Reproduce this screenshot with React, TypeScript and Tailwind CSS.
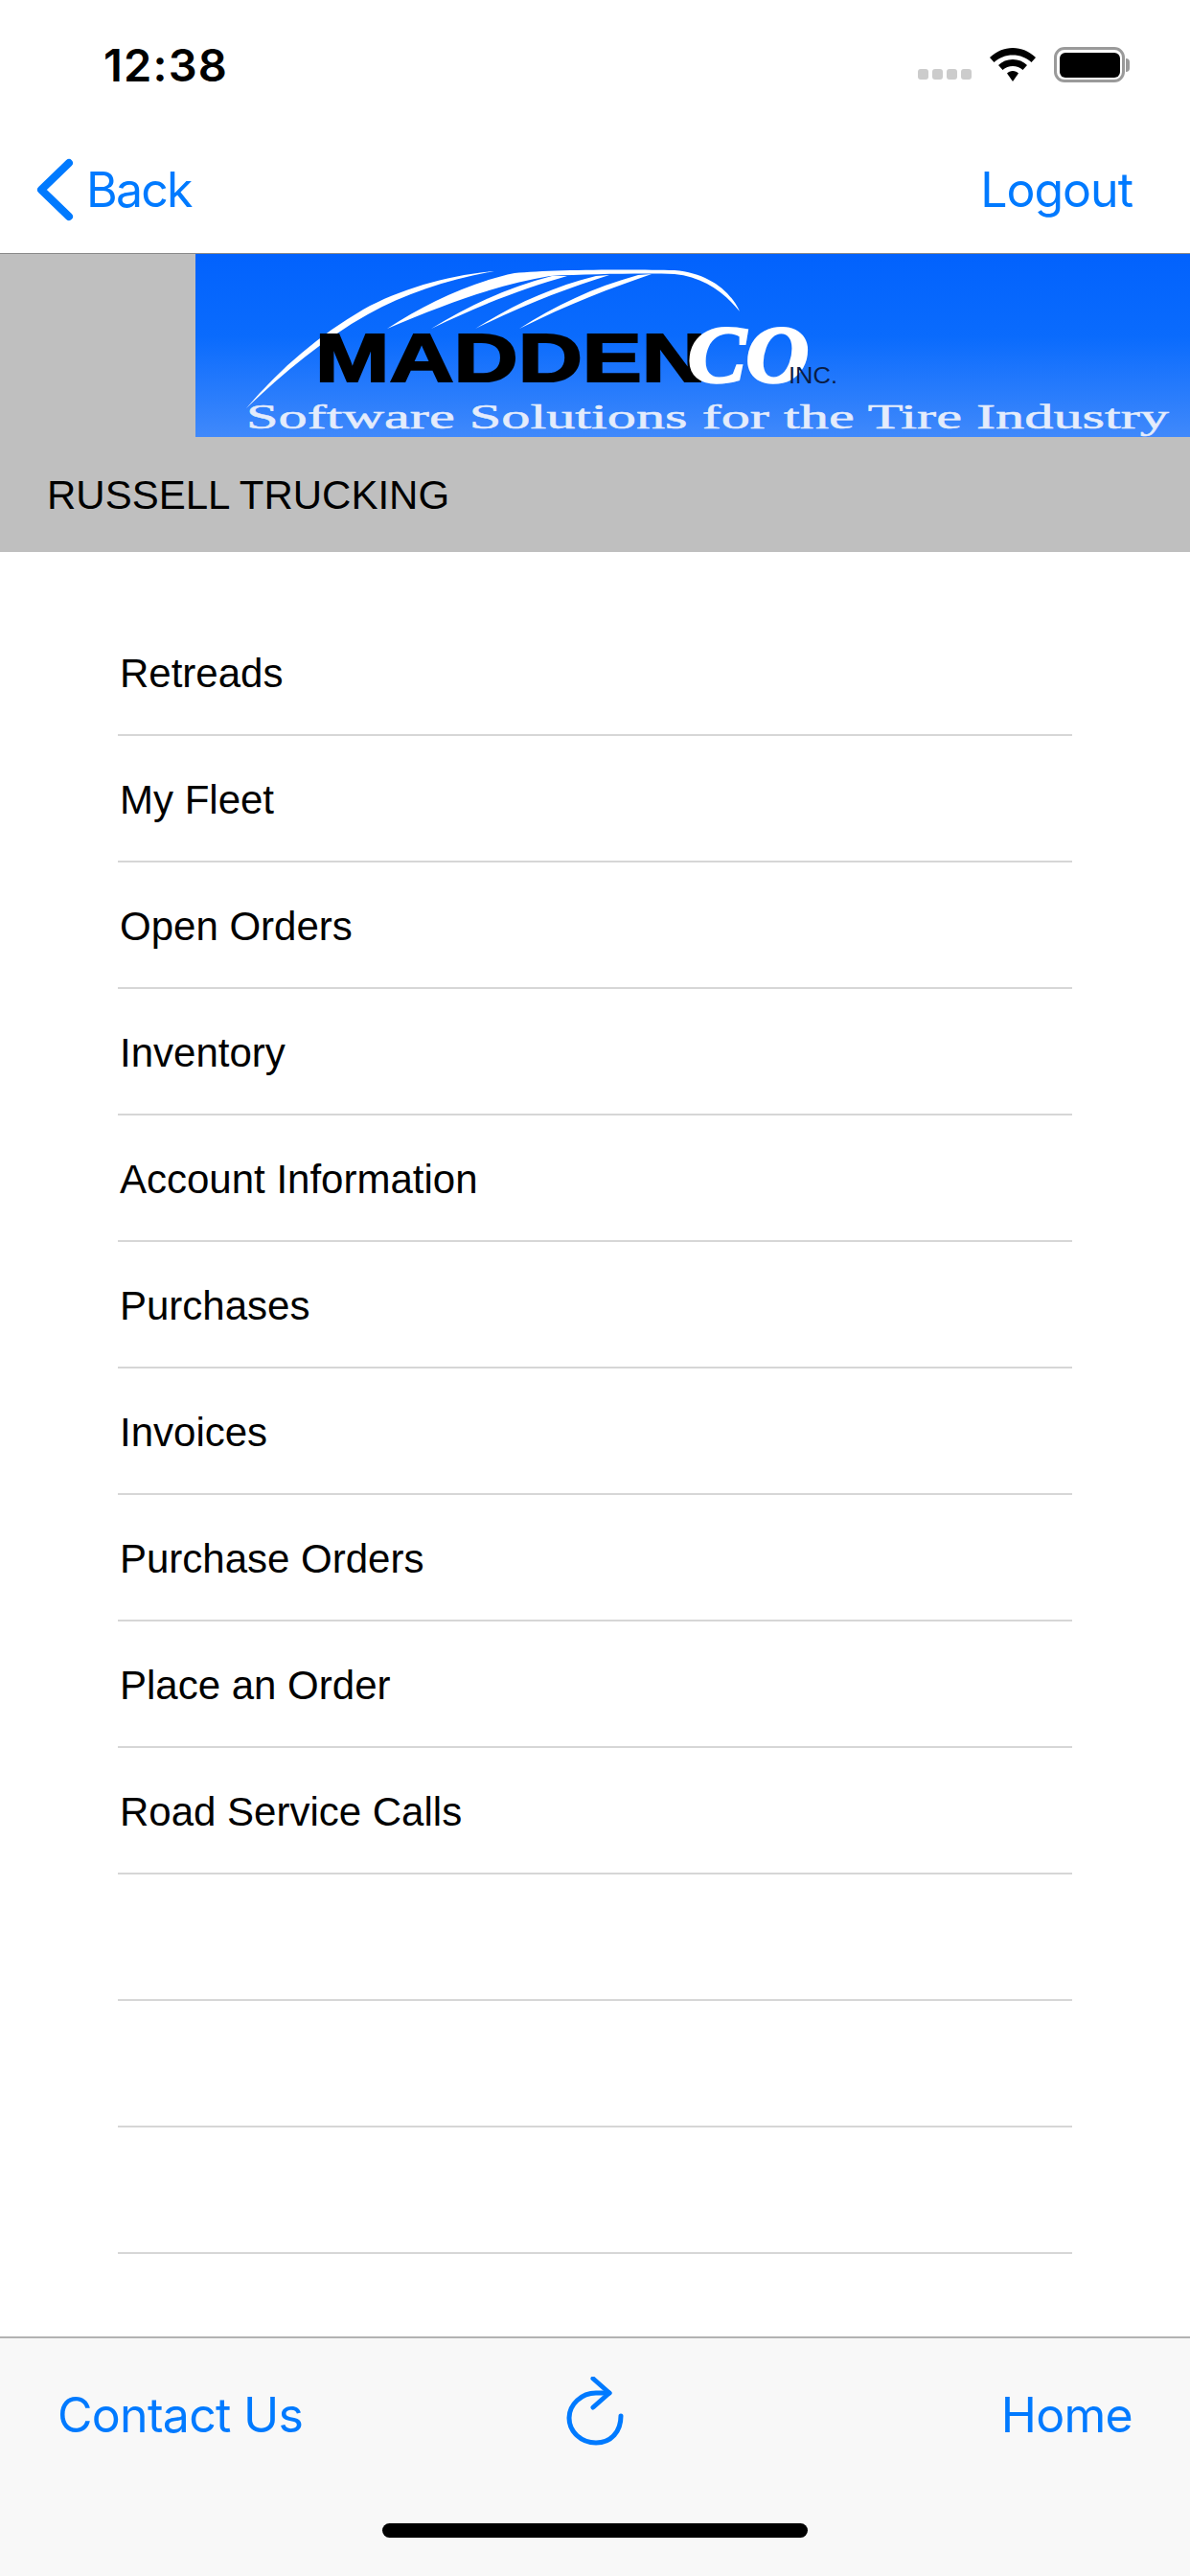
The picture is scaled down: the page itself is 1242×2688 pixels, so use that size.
const rows = ["Retreads","My Fleet","Open Orders","Inventory","Account Information","Purchases","Invoices","Purchase Orders","Place an Order","Road Service Calls","","",""];

function Logo() {
  return (
    <svg viewBox="0 0 1038 191" className="block h-[191px] w-[1038px]">
      <defs>
        <linearGradient id="bg" x1="0" y1="0" x2="0" y2="1">
          <stop offset="0" stopColor="#0262fd" />
          <stop offset="0.45" stopColor="#0a6bfd" />
          <stop offset="1" stopColor="#4089fb" />
        </linearGradient>
      </defs>
      <rect width="1038" height="191" fill="url(#bg)" />
      <g fill="#fff">
        <path d="M53 161C90 118 130 84 175 58C215 36 265 22 312 18C265 26 220 41 180 63C135 88 92 124 53 161Z" />
        <path d="M200 78C240 52 285 30 333 20C370 16 460 16 500 17C535 20 558 38 568 60C552 40 530 24 500 21C470 20 410 21 370 23C320 31 265 50 200 78Z" />
        <path d="M246 78C285 54 325 35 372 23L388 23C345 35 300 52 246 78Z" />
        <path d="M292 78C330 54 370 35 418 23L432 22C390 35 345 52 292 78Z" />
        <path d="M338 78C375 54 415 35 462 22L476 21C435 35 390 52 338 78Z" />
      </g>
      <text x="125" y="133" fontFamily="'Liberation Sans', sans-serif" fontWeight="700" fontSize="71" fill="#000" stroke="#000" strokeWidth="2" textLength="408" lengthAdjust="spacingAndGlyphs">MADDEN</text>
      <text x="514" y="134" fontFamily="'Liberation Serif', serif" fontWeight="700" fontStyle="italic" fontSize="84" fill="#fff" stroke="#fff" strokeWidth="3" textLength="126" lengthAdjust="spacingAndGlyphs">CO</text>
      <text x="619" y="135" fontFamily="'Liberation Sans', sans-serif" fontSize="23" fill="#0a1c44" textLength="51" lengthAdjust="spacingAndGlyphs">INC.</text>
      <text x="53" y="182" fontFamily="'Liberation Serif', serif" fontSize="35" fill="#e4ecfb" stroke="#e4ecfb" strokeWidth="0.5" textLength="963" lengthAdjust="spacingAndGlyphs">Software Solutions for the Tire Industry</text>
    </svg>
  );
}

function Wifi() {
  return (
    <svg width="48" height="36" viewBox="0 0 48 36">
      <path d="M24 0C15 0 7 3.600 0 10L4.500 15C10 10 16.500 7.500 24 7.500S38 10 43.500 15L48 10C41 3.600 33 0 24 0Z" />
      <path d="M24 12C18 12 13 14 9 18L13.500 23C16.500 20.500 20 19 24 19S31.500 20.500 34.500 23L39 18C35 14 30 12 24 12Z" />
      <path d="M24 24C21.500 24 19.500 25 18 26.500L24 35L30 26.500C28.500 25 26.500 24 24 24Z" />
    </svg>
  );
}

export default function App() {
  return (
    <div className="flex h-[2688px] w-[1242px] flex-col overflow-hidden bg-white font-['Inter',sans-serif]">
      <div className="flex h-[132px] items-start justify-between pl-[108px] pr-[63px] pt-[41px]">
        <span className="text-[47px] font-semibold leading-[54px] tracking-[1.2px] text-black">12:38</span>
        <div className="flex items-center pt-[8px]">
          <div className="mr-[19px] mt-[20px] flex gap-[4px]">
            <i className="h-[11px] w-[11px] rounded-[3px] bg-[#cccccc]" />
            <i className="h-[11px] w-[11px] rounded-[3px] bg-[#cccccc]" />
            <i className="h-[11px] w-[11px] rounded-[3px] bg-[#cccccc]" />
            <i className="h-[11px] w-[11px] rounded-[3px] bg-[#cccccc]" />
          </div>
          <Wifi />
          <div className="ml-[19px] flex items-center">
            <div className="flex h-[37px] w-[74px] items-center justify-center rounded-[11px] border-[3px] border-[#9a9a9a]">
              <div className="h-[26px] w-[63px] rounded-[6px] bg-black" />
            </div>
            <div className="ml-[1px] h-[14px] w-[4px] rounded-r-[4px] bg-[#9a9a9a]" />
          </div>
        </div>
      </div>

      <div className="flex h-[132px] items-center justify-between pl-[36px] pr-[60px] text-[50px] leading-none text-[#007aff]">
        <div className="flex items-center">
          <svg width="42" height="66" viewBox="0 0 42 66" fill="none" stroke="#007aff" strokeWidth="8" strokeLinecap="round" strokeLinejoin="round">
            <path d="M36 5L7 33L36 61" />
          </svg>
          <span className="ml-[12px] tracking-[-1.8px]">Back</span>
        </div>
        <span className="tracking-[-1px]">Logout</span>
      </div>

      <div className="border-t border-[#8a8a8a] bg-[#bfbfbf]">
        <div className="flex justify-end">
          <Logo />
        </div>
        <div className="flex h-[120px] items-center pl-[49px] font-['Liberation_Sans',sans-serif] text-[42px] text-black">RUSSELL TRUCKING</div>
      </div>

      <div className="flex-1 px-[123px] pt-[60px] font-['Liberation_Sans',sans-serif] text-[42px] text-black">
        {rows.map((r, i) => (
          <div key={i} className="flex h-[132px] items-center border-b-2 border-[#d6d6d6] pl-[2px] pt-[2px]">{r}</div>
        ))}
      </div>

      <div className="flex h-[250px] flex-col border-t-2 border-[#b2b2b2] bg-[#f8f8f8]">
        <div className="grid h-[160px] grid-cols-3 items-center px-[60px] text-[50px] leading-none text-[#007aff]">
          <span className="justify-self-start tracking-[-0.7px]">Contact Us</span>
          <svg width="60" height="72" viewBox="0 0 60 72" fill="none" stroke="#007aff" strokeWidth="5" strokeLinecap="round" strokeLinejoin="round" className="-mt-[8px] justify-self-center">
            <path d="M45 17H31C16 17 3 29 3 43S15 69 31 69S57 57 57 41" />
            <path d="M28 2L45 17L28 32" />
          </svg>
          <span className="justify-self-end tracking-[-0.7px]">Home</span>
        </div>
        <div className="mt-[33px] flex justify-center">
          <div className="h-[15px] w-[444px] rounded-full bg-black" />
        </div>
      </div>
    </div>
  );
}
